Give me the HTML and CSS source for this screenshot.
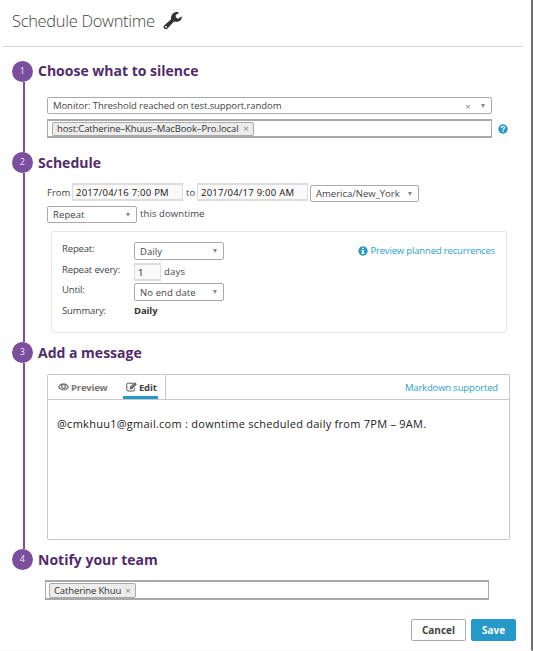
FILE: index.html
```html
<!DOCTYPE html>
<html lang="en">
<head>
<meta charset="utf-8">
<title>Schedule Downtime</title>
<link rel="stylesheet" href="styles.css">
</head>
<body>
<main class="modal">
  <header class="header">
    <h1 class="title">Schedule Downtime</h1>
    <svg class="wrench" viewBox="0 0 19 19"><path d="M1.2 14.4 8.1 8.2C7.3 4.2 10.7.4 15.4 1.2L16 2l-3.3 2 .2 2.5 2.2 1.2L18.4 5.600l.5.5C18.500 10.200 14.500 11.900 11 10.600L4.500 17.500C2.400 19.600-1 16.600 1.200 14.400Z" fill="#333"/><circle cx="3" cy="15.900" r=".9" fill="#fff"/></svg>
  </header>

  <section class="step step-silence">
    <div class="rail"><span class="num">1</span></div>
    <div class="content">
      <h2>Choose what to silence</h2>
      <div class="select monitor"><span class="t-monitor">Monitor: Threshold reached on test.support.random</span><span class="clear">×</span><i class="arrow"></i></div>
      <div class="scope">
        <div class="multi"><span class="tag tag-host"><span class="t-host">host:Catherine–Khuus–MacBook–Pro.local</span><b>×</b></span></div>
        <svg class="help" viewBox="0 0 10 10"><circle cx="5" cy="5" r="4.700" fill="#2499ca"/><path d="M3.300 3.900C3.400 1.800 6.800 1.900 6.600 3.900 6.500 4.900 5.100 4.800 5.100 6" fill="none" stroke="#fff" stroke-width="1.300"/><path d="M4.400 6.700h1.400v1.300H4.400z" fill="#fff"/></svg>
      </div>
    </div>
  </section>

  <section class="step step-schedule">
    <div class="rail"><span class="num">2</span></div>
    <div class="content">
      <h2>Schedule</h2>
      <div class="range">
        <span class="from">From</span><span class="field date">2017/04/16 7:00 PM</span><span class="to">to</span><span class="field date">2017/04/17 9:00 AM</span><div class="select zone"><span class="t-zone">America/New_York</span><i class="arrow"></i></div>
      </div>
      <div class="repeat"><div class="select short"><span>Repeat</span><i class="arrow"></i></div><span>this downtime</span></div>
      <div class="panel">
        <div class="options">
          <span>Repeat:</span><div class="select short"><span>Daily</span><i class="arrow"></i></div>
          <span>Repeat every:</span><div class="every"><span class="field count">1</span><span>days</span></div>
          <span>Until:</span><div class="select short"><span>No end date</span><i class="arrow"></i></div>
          <span>Summary:</span><strong>Daily</strong>
        </div>
        <a class="recur"><svg viewBox="0 0 10 10"><circle cx="5" cy="5" r="4.700" fill="#2499ca"/><path d="M4.100 1.700h1.800v1.400H4.100zM3.500 4h2.400v3h.7v1H3.500V7h.7V5h-.7z" fill="#fff"/></svg><span>Preview planned recurrences</span></a>
      </div>
    </div>
  </section>

  <section class="step step-message">
    <div class="rail"><span class="num">3</span></div>
    <div class="content">
      <h2>Add a message</h2>
      <div class="editor">
        <div class="bar">
          <div class="tabs">
            <span class="tab preview"><svg viewBox="0 0 11 8"><path d="M.6 4C3-.1 8-.1 10.400 4 8 8 3 8 .6 4Z" fill="none" stroke="#777" stroke-width="1.200"/><circle cx="5.500" cy="3.500" r="1.900" fill="none" stroke="#777" stroke-width="1.300"/></svg><span>Preview</span></span>
            <span class="tab edit"><svg viewBox="0 0 11 10"><path d="M7 1.200H2.200Q.8 1.200.8 2.600v5Q.8 9 2.200 9h5Q8.600 9 8.600 7.600V6" fill="none" stroke="#555" stroke-width="1"/><path d="m3.700 7.300.3-2.500L8.700.2l2.100 2L6.200 7Z" fill="#555"/><path d="m5 5.500 3.400-3.400" stroke="#fff" stroke-width=".6"/></svg><span>Edit</span></span>
          </div>
          <a class="markdown">Markdown supported</a>
        </div>
        <p class="message">@cmkhuu1@gmail.com : downtime scheduled daily from 7PM – 9AM.</p>
      </div>
    </div>
  </section>

  <section class="step step-notify">
    <div class="rail"><span class="num">4</span></div>
    <div class="content">
      <h2>Notify your team</h2>
      <div class="multi team"><span class="tag tag-user"><span class="t-user">Catherine Khuu</span><b>×</b></span></div>
    </div>
  </section>

  <footer class="actions"><button class="btn cancel">Cancel</button><button class="btn save">Save</button></footer>
</main>
</body>
</html>
```
FILE: styles.css
```css
* { box-sizing: border-box; }
body { margin: 0; background: #fff; }
.modal {
  width: 533px; height: 651px; overflow: hidden;
  border-right: 2px solid #707070; border-bottom: 1px solid #f7f7f7;
  font: 9.5px/12px "Open Sans", "Noto Sans", sans-serif;
  letter-spacing: .2px; color: #444; white-space: nowrap;
}
.header {
  display: flex; align-items: flex-start; height: 47px; width: 521px;
  margin-left: 3px; padding-left: 9px; border-bottom: 1px solid #d8d8d8;
}
.title { margin: 9px 0 0; width: 151px; font-size: 16.5px; line-height: 23px; font-weight: 300; letter-spacing: -.32px; color: #444; }
.wrench { width: 19px; height: 19px; margin-top: 11px; }
.step { display: flex; gap: 5px; padding-left: 12px; }
.step-silence { margin-top: 14px; height: 91px; }
.step-schedule { height: 190px; }
.step-message { height: 207px; }
.step-notify { height: 70px; }
.rail { width: 21px; display: flex; flex-direction: column; align-items: center; }
.rail::after { content: ""; flex: 1; width: 2px; margin-left: 2px; background: #7b4e9e; }
.step-notify .rail::after { display: none; }
.num { width: 21px; height: 21px; border-radius: 50%; background: #7b4e9e; color: #eee4f3; text-align: center; line-height: 20px; font-size: 9px; }
.content { flex: 1; }
h2 { margin: 0; height: 21px; font-size: 14px; line-height: 22px; font-weight: 700; letter-spacing: 0; color: #512c6d; }
.step-silence h2 { line-height: 20px; }
.select {
  display: flex; align-items: center; height: 17px; padding: 0 6px 0 5px;
  border: 1px solid #aaa; border-radius: 2px; background: #fff;
}
.arrow { width: 0; height: 0; margin-left: auto; border: 2px solid transparent; border-top: 4px solid #888; border-bottom: 0; }
.monitor { width: 445px; margin: 15px 0 0 9px; }
.t-monitor { letter-spacing: -.07px; }
.t-host, .t-user { letter-spacing: -.13px; }
.clear { margin: 2px 10px 0 auto; color: #888; }
.clear + .arrow { margin-left: 0; }
.scope { display: flex; align-items: center; margin: 5px 0 0 9px; }
.multi { width: 445px; height: 19px; padding: 1px 0 0 4px; border: solid #a9a9a9; border-width: 2px 1px; display: flex; }
.help { width: 10px; height: 10px; margin-left: 6px; }
.tag { display: flex; align-items: center; height: 14px; padding: 0 4px; border: 1px solid #aaa; border-radius: 2px; background: #ececec; color: #333; }
.tag b { margin-left: auto; font-weight: 400; color: #888; }
.tag-host { width: 202px; }
.tag-user { width: 87px; }
.range { display: flex; margin: 10px 0 0 9px; height: 19px; }
.from { width: 25px; line-height: 20px; letter-spacing: 0; }
.to { width: 14px; padding-left: 3px; line-height: 20px; }
.field { height: 18px; border: 1px solid #ddd; border-top-width: 2px; border-bottom-width: 2px; padding-left: 3px; line-height: 15px; background: #fafafa; color: #111; }
.date { width: 111px; letter-spacing: .25px; }
.zone { width: 109px; margin: 2px 0 0 2px; }
.t-zone { letter-spacing: 0; }
.repeat { display: flex; gap: 3px; margin: 4px 0 0 9px; line-height: 16px; letter-spacing: .1px; }
.short { width: 90px; }
.panel { display: flex; justify-content: space-between; width: 456px; height: 102px; margin: 8px 0 0 13px; padding: 10px 11px 0 10px; border: 1px solid #e4e4e4; border-radius: 3px; }
.options { display: grid; grid-template-columns: 72px 90px; grid-template-rows: 20.5px 20.5px 20.5px 18px; line-height: 13px; }
.options > span { letter-spacing: -.15px; }
.options .select { height: 18px; letter-spacing: .1px; }
.every { display: flex; gap: 3px; line-height: 18px; }
.count { width: 27px; }
.options strong { color: #333; letter-spacing: -.1px; }
.recur, .markdown { color: #2b9fca; letter-spacing: -.16px; }
.recur { display: flex; height: 18px; align-items: center; gap: 2px; }
.recur svg { width: 10px; height: 10px; }
.editor { width: 463px; height: 166px; margin: 11px 0 0 9px; border: 1px solid #c8c8c8; border-radius: 2px; }
.bar { display: flex; justify-content: space-between; height: 25px; border-bottom: 1px solid #c8c8c8; padding-right: 11px; line-height: 25px; }
.tabs { display: flex; width: 118px; padding-left: 10px; border-right: 1px solid #c8c8c8; font-weight: 700; color: #777; letter-spacing: -.2px; }
.tab { display: flex; align-items: center; gap: 2px; height: 24px; }
.preview { width: 65px; }
.preview svg { width: 11px; height: 8px; }
.edit { width: 35px; border-bottom: 3px solid #2499ca; color: #444; padding: 3px 0 0 3px; }
.edit svg { width: 11px; height: 10px; }
.message { margin: 15px 0 0 9px; font-size: 11px; line-height: 17px; color: #222; letter-spacing: .26px; }
.team { width: 444px; height: 20px; margin: 10px 0 0 7px; padding-left: 3px; }
.team .tag { height: 15px; }
.actions { display: flex; justify-content: flex-end; gap: 5px; padding-right: 15px; }
.btn { height: 22px; padding: 0; border: 1px solid #aaa; border-radius: 2px; background: #fff; font: 700 10px/18px "Open Sans", sans-serif; color: #444; }
.cancel { width: 55px; }
.save { width: 45px; background: #2499ca; border-color: #2499ca; color: #fff; }
```
